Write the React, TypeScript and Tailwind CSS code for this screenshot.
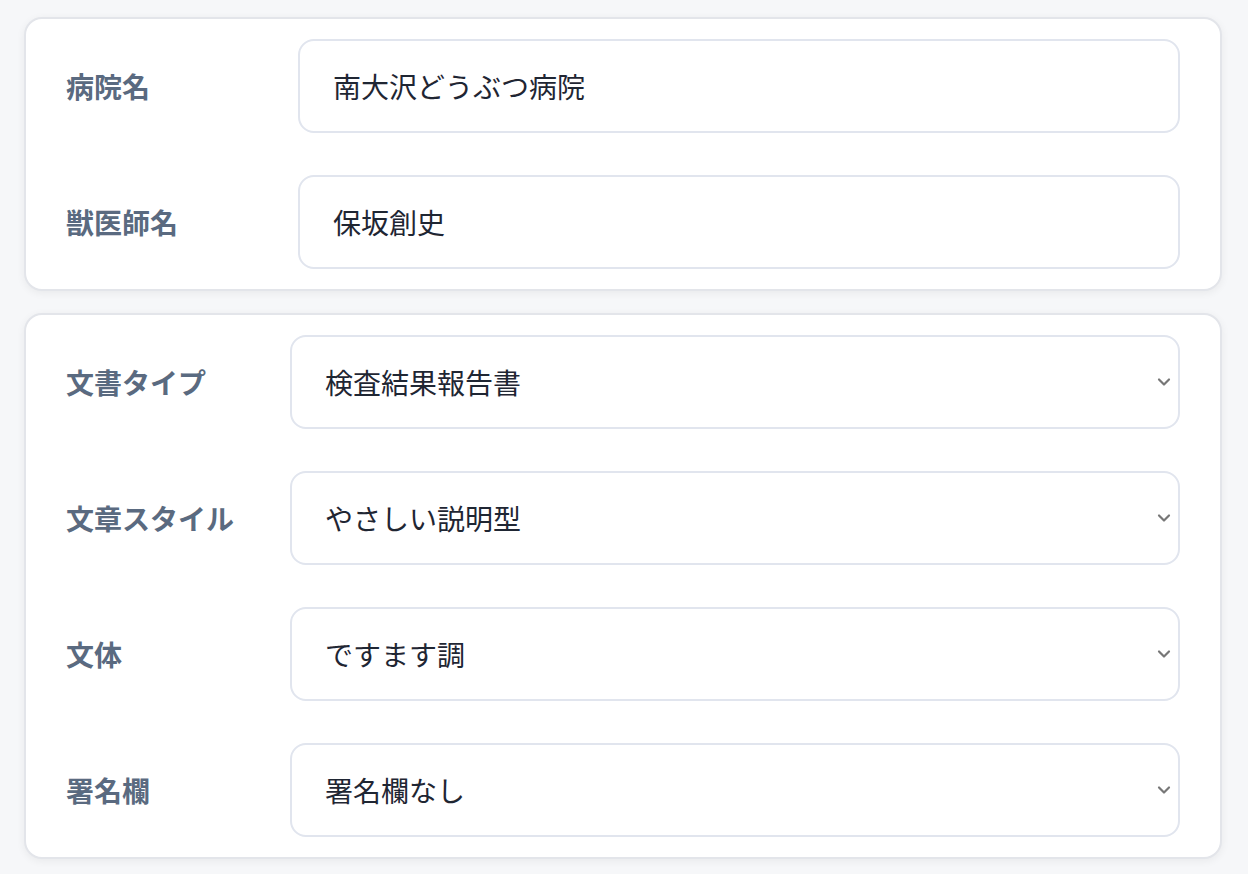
import React from "react"

const font = { fontFamily: '"Noto Sans CJK JP", "Noto Sans", sans-serif' }

function Chevron() {
  return (
    <svg className="pointer-events-none absolute right-[7px] top-1/2 -translate-y-1/2" width="14" height="9" viewBox="0 0 14 9" fill="none">
      <path d="M2 2 L7 7 L12 2" stroke="#777777" strokeWidth="2.2" strokeLinecap="round" strokeLinejoin="round" />
    </svg>
  )
}

function TextRow({ label, value }: { label: string; value: string }) {
  return (
    <div className="flex items-center">
      <div className="w-[272px] shrink-0 pl-[40px] text-[28px] font-bold text-[#5a6a80]">{label}</div>
      <div className="flex h-[94px] flex-1 items-center rounded-[16px] border-2 border-[#e1e5ee] bg-white pl-[33px] text-[28px] text-[#1f2633]">
        {value}
      </div>
    </div>
  )
}

function SelectRow({ label, value }: { label: string; value: string }) {
  return (
    <div className="flex items-center">
      <div className="w-[264px] shrink-0 pl-[40px] text-[28px] font-bold text-[#5a6a80]">{label}</div>
      <div className="relative flex h-[94px] flex-1 items-center rounded-[16px] border-2 border-[#e1e5ee] bg-white pl-[33px] text-[28px] text-[#1f2633]">
        {value}
        <Chevron />
      </div>
    </div>
  )
}

export default function App() {
  return (
    <div className="min-h-[874px] bg-[#f6f7f9] pl-[24px] pr-[26px] pt-[17px]" style={font}>
      <div className="flex flex-col gap-[42px] rounded-[18px] border-2 border-[#e3e5ea] bg-white pb-[20px] pr-[40px] pt-[20px] shadow-[0_2px_8px_rgba(0,0,0,0.06)]">
        <TextRow label="病院名" value="南大沢どうぶつ病院" />
        <TextRow label="獣医師名" value="保坂創史" />
      </div>
      <div className="mt-[22px] flex flex-col gap-[42px] rounded-[18px] border-2 border-[#e3e5ea] bg-white pb-[20px] pr-[40px] pt-[20px] shadow-[0_2px_8px_rgba(0,0,0,0.06)]">
        <SelectRow label="文書タイプ" value="検査結果報告書" />
        <SelectRow label="文章スタイル" value="やさしい説明型" />
        <SelectRow label="文体" value="ですます調" />
        <SelectRow label="署名欄" value="署名欄なし" />
      </div>
    </div>
  )
}
